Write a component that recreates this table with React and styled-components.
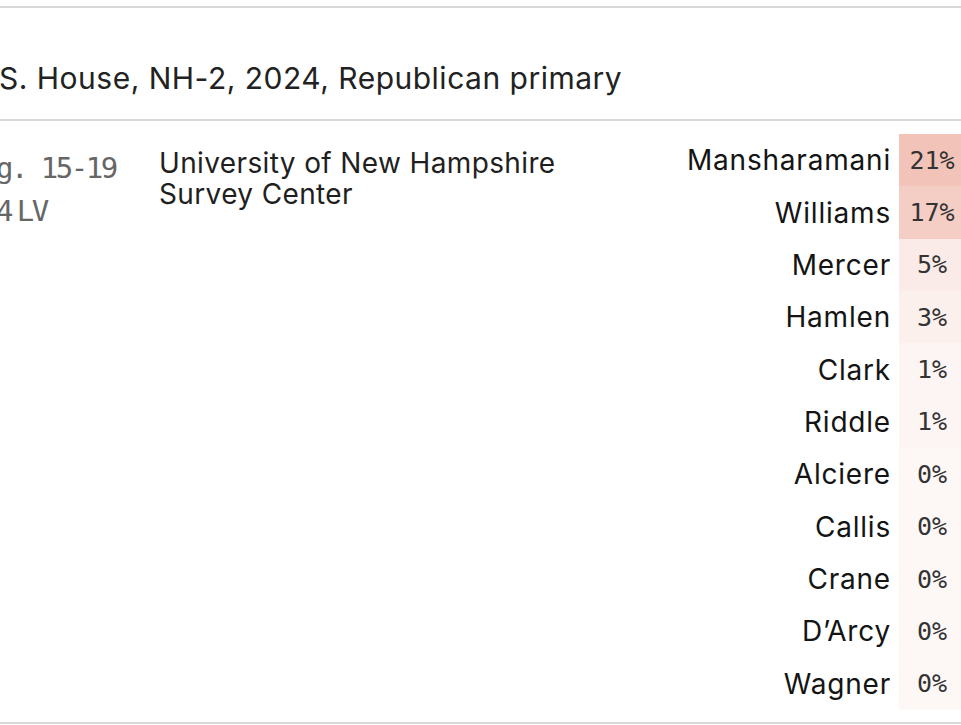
import React from "react";
import styled, { createGlobalStyle } from "styled-components";

const GlobalStyle = createGlobalStyle`
  html, body {
    margin: 0;
    padding: 0;
    background: #ffffff;
    overflow: hidden;
  }
  body {
    font-family: Inter, "Noto Sans", sans-serif;
    color: #1b1b1b;
  }
`;

const Page = styled.div`
  padding-top: 6px;
  margin-left: -37px;
  width: 1002px;
`;

const Card = styled.section`
  border-top: 2px solid #d8d8d8;
  border-bottom: 2px solid #d8d8d8;
`;

const Title = styled.h2`
  margin: 0;
  padding: 52px 0 23px 5px;
  font-family: Inter, "Noto Sans", sans-serif;
  font-weight: 400;
  font-size: 30px;
  letter-spacing: 0.5px;
  line-height: 36px;
  color: #222222;
  border-bottom: 2px solid #d8d8d8;
`;

const PollRow = styled.div`
  display: grid;
  grid-template-columns: 196px 1fr auto;
  padding: 13px 0 12px;
  align-items: start;
`;

const DateCell = styled.div`
  display: flex;
  flex-direction: column;
  gap: 9px;
  padding: 17px 0 0 3px;
  font-family: "DejaVu Sans Mono", monospace;
  font-size: 29px;
  letter-spacing: -2.5px;
  line-height: 34px;
  color: #666666;
`;

const Sample = styled.span`
  word-spacing: -9px;
`;

const Source = styled.div`
  padding-top: 14px;
  font-size: 28px;
  letter-spacing: 0.37px;
  line-height: 31px;
  color: #1f1f1f;
`;

const Results = styled.ul`
  list-style: none;
  margin: 0;
  padding: 0;
`;

const ResultRow = styled.li`
  display: flex;
  align-items: center;
  justify-content: flex-end;
  height: 52.36px;
`;

const Name = styled.span`
  font-size: 28px;
  letter-spacing: 0.8px;
  color: #141414;
  padding: 0 8px 0 0;
  white-space: nowrap;
`;

const Pct = styled.span`
  display: flex;
  align-items: center;
  justify-content: center;
  width: 66px;
  height: 100%;
  box-sizing: border-box;
  font-family: "DejaVu Sans Mono", monospace;
  font-size: 25px;
  color: #333333;
  background: ${(p) => `rgba(222, 104, 80, ${p.$alpha})`};
`;

const results = [
  ["Mansharamani", 21],
  ["Williams", 17],
  ["Mercer", 5],
  ["Hamlen", 3],
  ["Clark", 1],
  ["Riddle", 1],
  ["Alciere", 0],
  ["Callis", 0],
  ["Crane", 0],
  ["D\u2019Arcy", 0],
  ["Wagner", 0],
];

export default function App() {
  return (
    <>
      <GlobalStyle />
      <Page>
        <Card>
          <Title>U.S. House, NH-2, 2024, Republican primary</Title>
          <PollRow>
            <DateCell>
              <span>Aug. 15-19</span>
              <Sample>274 LV</Sample>
            </DateCell>
            <Source>
              University of New Hampshire
              <br />
              Survey Center
            </Source>
            <Results>
              {results.map(([name, pct]) => (
                <ResultRow key={name}>
                  <Name>{name}</Name>
                  <Pct $alpha={0.052 + pct * 0.0165}>{pct}%</Pct>
                </ResultRow>
              ))}
            </Results>
          </PollRow>
        </Card>
      </Page>
    </>
  );
}
